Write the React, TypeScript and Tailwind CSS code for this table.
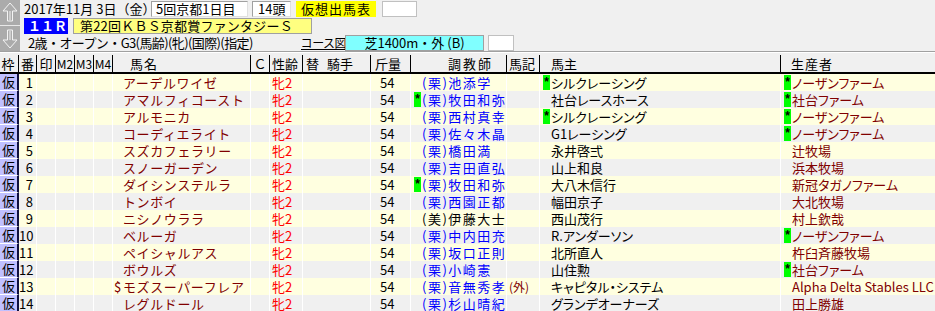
import React from "react";

type Entry = {
  no: number;
  name: string;
  dollar?: boolean;
  trainer: string;
  east?: boolean;
  tm?: boolean;
  ext?: string;
  owner: string;
  om?: boolean;
  breeder: string;
  bm?: boolean;
};

const entries: Entry[] = [
  { no: 1, name: "アーデルワイゼ", trainer: "(栗)池添学", owner: "シルクレーシング", om: true, breeder: "ノーザンファーム", bm: true },
  { no: 2, name: "アマルフィコースト", trainer: "(栗)牧田和弥", tm: true, owner: "社台レースホース", breeder: "社台ファーム", bm: true },
  { no: 3, name: "アルモニカ", trainer: "(栗)西村真幸", owner: "シルクレーシング", om: true, breeder: "ノーザンファーム", bm: true },
  { no: 4, name: "コーディエライト", trainer: "(栗)佐々木晶", owner: "G1レーシング", breeder: "ノーザンファーム", bm: true },
  { no: 5, name: "スズカフェラリー", trainer: "(栗)橋田満", owner: "永井啓弍", breeder: "辻牧場" },
  { no: 6, name: "スノーガーデン", trainer: "(栗)吉田直弘", owner: "山上和良", breeder: "浜本牧場" },
  { no: 7, name: "ダイシンステルラ", trainer: "(栗)牧田和弥", tm: true, owner: "大八木信行", breeder: "新冠タガノファーム" },
  { no: 8, name: "トンボイ", trainer: "(栗)西園正都", owner: "幅田京子", breeder: "大北牧場" },
  { no: 9, name: "ニシノウララ", trainer: "(美)伊藤大士", east: true, owner: "西山茂行", breeder: "村上欽哉" },
  { no: 10, name: "ベルーガ", trainer: "(栗)中内田充", owner: "R.アンダーソン", breeder: "ノーザンファーム", bm: true },
  { no: 11, name: "ペイシャルアス", trainer: "(栗)坂口正則", owner: "北所直人", breeder: "杵臼斉藤牧場" },
  { no: 12, name: "ボウルズ", trainer: "(栗)小崎憲", owner: "山住勲", breeder: "社台ファーム", bm: true },
  { no: 13, name: "モズスーパーフレア", dollar: true, trainer: "(栗)音無秀孝", ext: "(外)", owner: "キャピタル・システム", breeder: "Alpha Delta Stables LLC" },
  { no: 14, name: "レグルドール", trainer: "(栗)杉山晴紀", owner: "グランデオーナーズ", breeder: "田上勝雄" },
];

function Mark() {
  return (
    <span className="flex items-center justify-center w-[7px] h-[15px] mt-[1px] bg-[#00ff00] text-black text-[12px] font-bold leading-none font-['Liberation_Mono',monospace]">
      *
    </span>
  );
}

function Arrow({ down }: { down?: boolean }) {
  return (
    <svg width="20" height="25" viewBox="0 0 20 25" className={down ? "rotate-180" : ""}>
      <path d="M10 3 L3 11 L7.5 11 L7.5 21 L12.5 21 L12.5 11 L17 11 Z" fill="none" stroke="#f4f4f4" strokeWidth="1" />
      <path d="M10 11 L10 20" stroke="#f4f4f4" strokeWidth="1" />
    </svg>
  );
}

function Row({ r, i }: { r: Entry; i: number }) {
  const bg = i % 2 === 0 ? "bg-[#ffffe0]" : "bg-[#f0f0f0]";
  return (
    <div
      className={`grid grid-cols-[19px_18px_19px_19px_19px_19px_138px_19px_33px_68px_40px_96px_33px_241px_154px] h-[17px] text-[13px] leading-[17px] whitespace-nowrap ${bg}`}
    >
      <div className="bg-[#c0c0ff] border-r-2 border-r-[#101040] border-b border-b-white text-center text-black leading-[16px]">仮</div>
      <div className="border-r border-white text-right pr-[3px]">{r.no}</div>
      <div className="border-r border-white" />
      <div className="border-r border-white" />
      <div className="border-r border-white" />
      <div className="border-r border-white" />
      <div className="border-r border-white flex pl-px text-[#800000] tracking-[0.6px]">
        <span className="w-[9px] shrink-0">{r.dollar ? "$" : ""}</span>
        <span>{r.name}</span>
      </div>
      <div className="border-r border-white" />
      <div className="border-r border-white pl-[2px] text-[#ff0000]">牝2</div>
      <div className="border-r border-white" />
      <div className="border-r border-white pl-[9px]">54</div>
      <div className="border-r border-white flex pl-[3px] overflow-hidden">
        <span className="w-[8px] shrink-0">{r.tm ? <Mark /> : null}</span>
        <span className={`tracking-[1.5px] ${r.east ? "text-black" : "text-[#0000ff]"}`}>{r.trainer}</span>
      </div>
      <div className="border-r border-white pl-[2px] text-[12px] text-[#800000]">{r.ext ?? ""}</div>
      <div className="border-r border-white flex pl-[3px] [font-feature-settings:'palt']">
        <span className="w-[8px] shrink-0">{r.om ? <Mark /> : null}</span>
        <span>{r.owner}</span>
      </div>
      <div className="flex pl-[3px] text-[#800000] [font-feature-settings:'palt'] overflow-hidden">
        <span className="w-[8px] shrink-0">{r.bm ? <Mark /> : null}</span>
        <span>{r.breeder}</span>
      </div>
    </div>
  );
}

export default function App() {
  return (
    <div className="w-[935px] h-[311px] overflow-hidden bg-[#f0f0f0] text-black font-['Noto_Sans_CJK_JP',sans-serif]">
      {/* top info area */}
      <div className="flex h-[51px]">
        <div className="w-[20px] flex flex-col">
          <div className="h-[25px] bg-[#ababab]">
            <Arrow />
          </div>
          <div className="h-[1px] bg-[#e8e8e8]" />
          <div className="h-[25px] bg-[#ababab]">
            <Arrow down />
          </div>
        </div>
        <div className="flex-1 flex flex-col text-[13px] leading-[16px] whitespace-nowrap">
          <div className="flex items-center h-[17px] pt-px">
            <span className="w-[131px] pl-[4px]">2017年11月 3日（金）</span>
            <span className="w-[97px] h-[16px] bg-white border border-t-[#a0a0a0] border-l-[#a0a0a0] border-b-[#e0e0e0] border-r-[#e0e0e0] pl-[4px] leading-[14px]">5回京都1日目</span>
            <span className="ml-[4px] w-[39px] h-[16px] bg-white border border-t-[#a0a0a0] border-l-[#a0a0a0] border-b-[#e0e0e0] border-r-[#e0e0e0] pl-[5px] leading-[14px]">14頭</span>
            <span className="ml-[5px] w-[80px] h-[16px] bg-[#ffff00] pl-[5px] tracking-[1px] leading-[16px]">仮想出馬表</span>
            <span className="ml-[6px] w-[35px] h-[16px] bg-white border border-[#c0c0c0]" />
          </div>
          <div className="flex items-center h-[17px]">
            <span className="ml-[4px] w-[44px] h-[16px] bg-[#0000ff] text-white font-bold pl-[4px] leading-[16px]">１１Ｒ</span>
            <span className="ml-[5px] w-[239px] h-[16px] bg-[#ffff80] border border-[#a0a0a0] pl-[6px] tracking-[0.2px] leading-[14px]">第22回ＫＢＳ京都賞ファンタジーＳ</span>
          </div>
          <div className="flex items-center h-[17px]">
            <span className="w-[281px] pl-[8px] tracking-[-0.6px]">2歳・オープン・G3(馬齢)(牝)(国際)(指定)</span>
            <span className="w-[44px] underline text-[12px] [font-feature-settings:'palt']">コース図</span>
            <span className="w-[139px] h-[16px] bg-[#80ffff] border border-[#a0a0a0] text-center leading-[14px]">芝1400m・外 (B)</span>
            <span className="ml-[4px] w-[26px] h-[16px] bg-white border border-[#c0c0c0]" />
          </div>
        </div>
      </div>
      <div className="h-[2px] border-t border-[#a0a0a0] bg-white" />
      {/* header */}
      <div className="grid grid-cols-[19px_18px_19px_19px_19px_19px_138px_19px_33px_68px_40px_96px_33px_241px_154px] h-[21px] pt-[2px] border-b-2 border-black text-[13px] leading-[17px] whitespace-nowrap">
        <div className="border-r border-black text-center pr-[2px]">枠</div>
        <div className="border-r border-black text-center">番</div>
        <div className="border-r border-black text-center">印</div>
        <div className="border-r border-black text-center text-[12px]">M2</div>
        <div className="border-r border-black text-center text-[12px]">M3</div>
        <div className="border-r border-black text-center text-[12px]">M4</div>
        <div className="border-r border-black pl-[17px] tracking-[1px]">馬名</div>
        <div className="border-r border-black text-center">Ｃ</div>
        <div className="border-r border-black pl-[2px]">性齢</div>
        <div className="border-r border-black pl-[3px]">
          替<span className="ml-[8px]">騎手</span>
        </div>
        <div className="border-r border-black pl-[4px]">斤量</div>
        <div className="border-r border-black pl-[37px] tracking-[2px]">調教師</div>
        <div className="border-r border-black pl-[2px]">馬記</div>
        <div className="border-r border-black pl-[11px]">馬主</div>
        <div className="pl-[10px] tracking-[1px]">生産者</div>
      </div>
      {entries.map((r, i) => (
        <Row key={r.no} r={r} i={i} />
      ))}
    </div>
  );
}
